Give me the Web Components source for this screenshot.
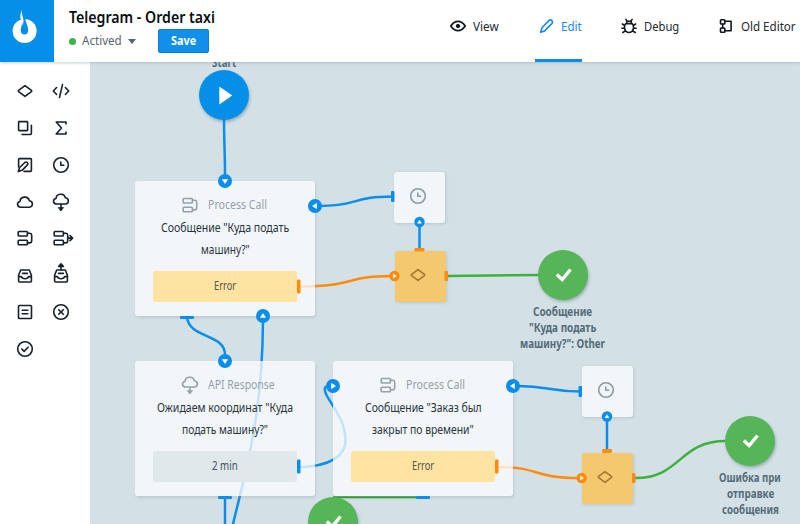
<!DOCTYPE html>
<html lang="en"><head><meta charset="utf-8"><title>Telegram - Order taxi</title>
<style>
html,body{margin:0;width:800px;height:524px;overflow:hidden;background:#fff;font-family:"Noto Sans","Open Sans",sans-serif}
</style></head><body><process-editor></process-editor>
<script>
const define=(name,css,render)=>customElements.define(name,class extends HTMLElement{
  connectedCallback(){
    if(this.shadowRoot)return;
    const root=this.attachShadow({mode:'open'});
    root.innerHTML='<style>'+css+'</style>'+render(this);
  }
});
const A=(el,n,d='')=>el.getAttribute(n)??d;

/* Icons share a 24px box and take their colour from the text colour. */
const flow='<rect x="5.2" y="5.5" width="9.2" height="4.5" rx=".8"/><rect x="5.2" y="14.2" width="9.2" height="4.5" rx=".8"/><path d="M14.6 7.3h2.300q1.800.2 1.800 2v5.600q0 1.800-1.800 2h-2.300"/>';
const tray='<path d="M7.7 7h8.600l2.100 5.300v5.700q0 1-1 1H6.600q-1 0-1-1v-5.700zM5.700 13.600h2.600q.8 2.200 3.700 2.200t3.700-2.200h2.600M9.600 10.400h4.800"/>';
const icons={
  diamond:'<path d="M12 6.600l6.400 4.800q.6.6 0 1.200L12 17.400l-6.400-4.800q-.6-.6 0-1.200z"/>',
  code:'<path d="M7.600 8.500L4.300 12l3.300 3.500M16.400 8.500l3.300 3.500-3.300 3.500M13.500 5.600l-3 12.800"/>',
  copy:'<rect x="5.600" y="5.600" width="9" height="9" rx=".6"/><path d="M18.400 9.300v8.300q0 .9-.9.9H9"/>',
  sigma:'<path d="M17 8V6H7.200l5.300 6-5.300 6H17v-2"/>',
  edit:'<path d="M5.600 14V6.400q0-.8.8-.8h11.200q.8 0 .8.8v11.200q0 .8-.8.8H11"/><path d="M5.300 18.600l1.300-4.100 5.300-5q1.400-1 2.400 0 1.100 1.100.1 2.400l-5 5.200z"/>',
  clock:'<circle cx="12" cy="12" r="7.300"/><path d="M11.800 9v3.200h3"/>',
  cloud:'<path d="M8 17.200c-4.300 0-4.500-5-1-5.700.3-5 7.800-6.300 9.400-.8 4 .5 3.900 6.300 0 6.500z"/>',
  down:'<path d="M8 14c-4.300 0-4.500-4.700-1-5.500.3-4.900 7.800-6.200 9.400-.8 4 .5 3.900 6.100 0 6.300zM12 14v6"/><path d="M9.500 17.600h5L12 20.700z" fill="currentColor" stroke-width=".8"/>',
  flow, flowout:flow+'<path d="M18.800 12.100h4.800M21 9.600l2.600 2.500-2.600 2.500"/>',
  tray, trayup:tray+'<path d="M12 7V1.300M9.700 3.400L12 .9l2.300 2.500z" fill="currentColor"/>',
  list:'<rect x="5.500" y="5.500" width="13" height="13" rx=".8"/><path d="M9.200 10.300h5.600M9.200 13.700h5.600"/>',
  cross:'<circle cx="12" cy="12" r="7.300"/><path d="M9.700 9.700l4.600 4.600M14.300 9.700l-4.600 4.600"/>',
  check:'<circle cx="12" cy="12" r="7.300"/><path d="M8.900 12.100l2.200 2.300 4-4.200"/>',
  eye:'<path d="M4.700 12Q8 7.400 12 7.400t7.300 4.600Q16 16.600 12 16.600T4.700 12z"/><circle cx="12" cy="12" r="1.700" fill="currentColor" stroke-width="1"/>',
  pencil:'<path d="M5.700 18.300l1.200-4.500 7.300-7.400q1.300-1 2.700.2 1.300 1.400.2 2.800l-7.400 7.500z"/>',
  bug:'<path d="M8.800 9.700h6.400c1.600 1.300 2 5.700-.2 7.700q-3 2.200-6 0c-2.200-2-1.800-6.400-.2-7.700zM9.700 9.500V7.400h4.600v2.100M10 7L8.900 5.400M14 7l1.100-1.600M7.700 11.600L5.400 10M16.300 11.600l2.300-1.600M7.500 14.300H4.900M16.500 14.300h2.600M8.400 16.900l-2.600 1.600M15.600 16.900l2.600 1.600"/>',
  nodes:'<rect x="6.500" y="5.800" width="4.300" height="4.200" rx=".7"/><rect x="6.500" y="14" width="4.300" height="4.200" rx=".7"/><path d="M11.200 7.200h5.900v9.500h-5.900M8.700 10v4"/>'
};
define('ui-icon',':host{display:block;width:24px;height:24px;flex:none}svg{display:block;overflow:visible;fill:none;stroke:currentColor;stroke-width:1.600;stroke-linecap:round;stroke-linejoin:round}',
 e=>`<svg width="24" height="24" viewBox="0 0 24 24">${icons[A(e,'name')]}</svg>`);

/* One line of text condensed to the width given in w. */
customElements.define('fit-text',class extends HTMLElement{
  connectedCallback(){
    if(this.shadowRoot)return;
    const r=this.attachShadow({mode:'open'});
    r.innerHTML=`<style>:host{display:block;flex:none;width:${A(this,'w')}px;white-space:nowrap}span{display:inline-block;transform-origin:0 50%}</style><span><slot></slot></span>`;
    const s=r.querySelector('span');
    s.style.transform=`scaleX(${+A(this,'w')/s.offsetWidth})`;
  }
});

define('app-logo',':host{display:block;width:54px;height:62px;background:#068fe8}svg{display:block}',
 ()=>`<svg width="54" height="62"><circle cx="24.600" cy="31" r="12" fill="#fff"/><path d="M22 17.500L25.500 18C25.300 22.500 28.200 25.500 28.200 30.300a3.700 4.200 0 0 1-7.400 0C20.800 26.500 23.300 23 22 17.500z" fill="#068fe8"/><path d="M22 9.800c-1 3.200-2.700 6.300-1 9.800.8 1.600 1.700 3.500 1.300 6.200 1-2 1.600-4.200 1-6.700-.8-3.300-1.800-5.800-1.300-9.300z" fill="#fff"/></svg>`);

define('nav-tab',`:host{display:flex;height:62px;box-sizing:border-box;padding-top:14px;color:#23292e;font-size:12.200px;line-height:26px}
 :host([active]){color:#1689ee;border-bottom:3.500px solid #068fe8}ui-icon{color:#10171d;margin-right:var(--gap,3px)}:host([active]) ui-icon{color:#1689ee}`,
 e=>`<ui-icon name="${A(e,'icon')}"></ui-icon><fit-text w="${A(e,'w')}">${A(e,'label')}</fit-text>`);

define('app-header',`:host{display:flex;position:relative;z-index:2;height:62px;background:#fff;box-shadow:0 1px 3px #7c8e966b}
 .info{width:392px;padding:5px 0 0 15px;box-sizing:border-box}
 .title{font:600 15.500px/24px "Noto Sans";color:#080d10}.row{display:flex;align-items:center;height:24px;font-size:12.200px;line-height:16px;color:#56676f}
 .row>fit-text{margin-top:-1px}
 .dot{width:7px;height:7px;border-radius:50%;background:#40b24b;margin-right:6px}
 .arrow{border:4px solid transparent;border-top:5px solid #52656d;border-bottom:0;margin:0 22px 0 6px}
 .save{display:flex;width:51px;height:24px;box-sizing:border-box;justify-content:center;border:1px solid #0a80d6;border-radius:2px;background:#118fe9;color:#fff;font:700 11.900px/21px "Noto Sans"}
 nav{display:flex;flex:none}`,
 ()=>`<app-logo></app-logo><div class="info"><div class="title"><fit-text w="146">Telegram - Order taxi</fit-text></div><div class="row"><i class="dot"></i><fit-text w="40">Actived</fit-text><i class="arrow"></i><div class="save"><fit-text w="25.500">Save</fit-text></div></div></div>
 <nav><nav-tab icon="eye" label="View" w="26" style="margin-right:36px"></nav-tab><nav-tab icon="pencil" label="Edit" w="21" style="--gap:2px;margin-right:34.500px" active></nav-tab><nav-tab icon="bug" label="Debug" w="35" style="--gap:3.500px;margin-right:35px"></nav-tab><nav-tab icon="nodes" label="Old Editor" w="55" style="--gap:3px"></nav-tab></nav>`);

define('tool-palette',`:host{display:grid;grid-template-columns:24px 24px;column-gap:12px;grid-auto-rows:36.850px;align-content:start;justify-items:center;box-sizing:border-box;width:90px;padding:17px 0 0 13px;background:#fff;color:#17212b}`,
 ()=>'diamond code copy sigma edit clock cloud down flow flowout tray trayup list cross check'.split(' ').map(n=>`<ui-icon name="${n}"></ui-icon>`).join(''));

define('step-card',`:host{position:absolute;width:180px;height:135px;box-sizing:border-box;padding-top:12px;border-radius:3px;background:rgba(252,253,254,.77);box-shadow:1px 2px 3px #7891a03d;color:#26333c}
 .head{display:flex;height:24px;line-height:23.500px;margin-left:42.500px;color:#94a1ac;font-size:12px}.head fit-text{margin-left:6.500px}.head ui-icon{margin-top:-.5px}
 .body{display:flex;flex-direction:column;align-items:center;font-size:12px;line-height:22px;height:54px}
 .bar{display:flex;justify-content:center;width:144px;height:31px;border-radius:2px;background:var(--bar,#ffe3a0);font-size:12px;line-height:30px;margin-left:18px;color:#56534b}
 :host([timer]) .bar{--bar:#e1e8eb;color:#46545c}`,
 e=>`<div class="head"><ui-icon name="${A(e,'icon')}"></ui-icon><fit-text w="${A(e,'hw')}">${A(e,'head')}</fit-text></div><div class="body"><slot></slot></div><div class="bar"><fit-text w="${A(e,'bw')}">${A(e,'bar')}</fit-text></div>`);

define('mini-node',`:host{position:absolute;display:flex;width:51px;height:51px;align-items:center;justify-content:center;border-radius:3px;background:#f3f6f8;color:#8c9ba8;box-shadow:1px 1px 3px #7891a04d;box-sizing:border-box;padding:0 2.500px 3px 0}:host([logic]){background:#f3c86f;color:#a17a30;padding:0 4px 3px 0}`,
 e=>`<ui-icon name="${A(e,'icon')}"></ui-icon>`);

define('round-node',`:host{position:absolute;width:50px;height:50px;border-radius:50%;background:#56b558;box-shadow:1px 2px 3px #54707b70}:host([start]){background:#068fe8}svg{display:block}`,
 e=>`<svg width="50" height="50">${e.hasAttribute('start')?'<path d="M20.300 16.500v18l13-9z" fill="#fff"/>':'<path d="M18.800 24.500l5.400 5 8.300-10" fill="none" stroke="#fff" stroke-width="3.300"/>'}</svg>`);

define('node-label',`:host{position:absolute;display:flex;flex-direction:column;align-items:center;width:100px;font:700 11.600px/16.200px "Noto Sans";color:#536b76}`,()=>'<slot></slot>');

const wire=(d,c='#0a8eea',w=2.500)=>`<path d="${d}" stroke="${c}" stroke-width="${w}"/>`;
define('wire-layer',':host{position:absolute;left:0;top:0}svg{display:block;fill:none}',()=>{
  const o='#ff8b0a',g='#3fb03b';
  return `<svg width="800" height="524">${wire('M224 118C224 145 225 150 225 175')}${wire('M320 206C358 206 352 196.500 393 196.500')}${wire('M419.500 222V250')}${wire('M300 286.500C355 286.500 345 276 392 276',o)}${wire('M448 276L540 275',g)}
  ${wire('M187 317C189 339 225 333 225 355')}${wire('M263 320C262.500 395 253 440 243.300 482L231 532')}${wire('M225 496V524')}
  ${wire('M298 467C331 467 346 455 345.500 440C345 421 335 410 327 396C323 388 324 385.500 332 385.500')}
  ${wire('M518 386C548 386 550 391.500 581 391.500')}${wire('M607 420V451')}${wire('M498 467C540 467 532 478 580 478',o)}${wire('M635 478C682 478 678 441 726 441',g)}</svg>`;
});
define('port-layer',':host{position:absolute;left:0;top:0;pointer-events:none}svg{display:block}',()=>{
  const p=(x,y,a,r=7,c='#0a8eea')=>`<g transform="translate(${x} ${y}) rotate(${a})"><circle r="${r}" fill="${c}"/><path d="M${-r*.22} ${-r*.38}L${r*.36} 0L${-r*.22} ${r*.38}z" fill="#fff" stroke="#fff" stroke-width=".5"/></g>`;
  const t=(x,y,w,h,c='#0a8eea')=>`<rect x="${x}" y="${y}" width="${w}" height="${h}" rx="1" fill="${c}"/>`,o='#ff8b0a';
  return `<svg width="800" height="524">${p(225,181,90)}${p(315,206,180)}${p(263,316,-90)}${p(225,361,90)}${p(333,386,0)}${p(513,386,180)}${p(419.500,222,-90,5.200)}${p(607,416.500,-90,5.200)}${p(394.500,276,0,5.200,o)}${p(581.700,478,0,5.200,o)}
  ${t(391,191,3.500,11)}${t(578.500,386,3.500,11)}${t(297,279.500,3.500,14,o)}${t(297,459.500,3.500,14)}${t(495,459.500,3.500,14,o)}${t(180,316,14,3)}${t(218,496,14,3)}${t(414.500,248,10,3.500,o)}${t(602,449,10,4,o)}${t(444.500,271,3.500,10,o)}${t(632,473,3.500,10,o)}<path d="M333 497.300h84" stroke="#329e30" stroke-width="2"/>${t(416,496,14,3)}</svg>`;
});

define('process-canvas',`:host{display:block;position:relative;flex:1;overflow:hidden;background:#d3e0e6}
 /* The stage shares its origin with the window, so node positions are window positions. */
 .stage{position:absolute;left:-90px;top:-62px;width:800px;height:524px}`,
 ()=>`<div class="stage"><wire-layer></wire-layer>
 <node-label style="left:174px;top:54.500px"><fit-text w="24.500">Start</fit-text></node-label>
 <round-node start style="left:199px;top:70px"></round-node>
 <step-card icon="flow" head="Process Call" hw="59" bar="Error" bw="22.500" style="left:135px;top:181px"><fit-text w="128">Сообщение "Куда подать</fit-text><fit-text w="49">машину?"</fit-text></step-card>
 <step-card timer icon="down" head="API Response" hw="67" bar="2 min" bw="26" style="left:135px;top:361px"><fit-text w="136">Ожидаем координат "Куда</fit-text><fit-text w="86">подать машину?"</fit-text></step-card>
 <step-card icon="flow" head="Process Call" hw="59" bar="Error" bw="22.500" style="left:333px;top:361px"><fit-text w="117">Сообщение "Заказ был</fit-text><fit-text w="102">закрыт по времени"</fit-text></step-card>
 <mini-node icon="clock" style="left:394px;top:172px"></mini-node><mini-node logic icon="diamond" style="left:394.500px;top:251px"></mini-node>
 <mini-node icon="clock" style="left:581.500px;top:366px"></mini-node><mini-node logic icon="diamond" style="left:581.500px;top:453px"></mini-node>
 <round-node style="left:538px;top:250px"></round-node><round-node style="left:725px;top:416px"></round-node>
 <node-label style="left:512.500px;top:303.500px"><fit-text w="59">Сообщение</fit-text><fit-text w="67">"Куда подать</fit-text><fit-text w="85">машину?": Other</fit-text></node-label>
 <node-label style="left:700px;top:469.500px"><fit-text w="62">Ошибка при</fit-text><fit-text w="47">отправке</fit-text><fit-text w="57">сообщения</fit-text></node-label>
 <port-layer></port-layer><round-node style="left:308px;top:497px"></round-node></div>`);

define('process-editor',':host{display:flex;flex-direction:column;width:800px;height:524px;overflow:hidden}main{display:flex;flex:1;min-height:0}',
 ()=>'<app-header></app-header><main><tool-palette></tool-palette><process-canvas></process-canvas></main>');
</script></body></html>
